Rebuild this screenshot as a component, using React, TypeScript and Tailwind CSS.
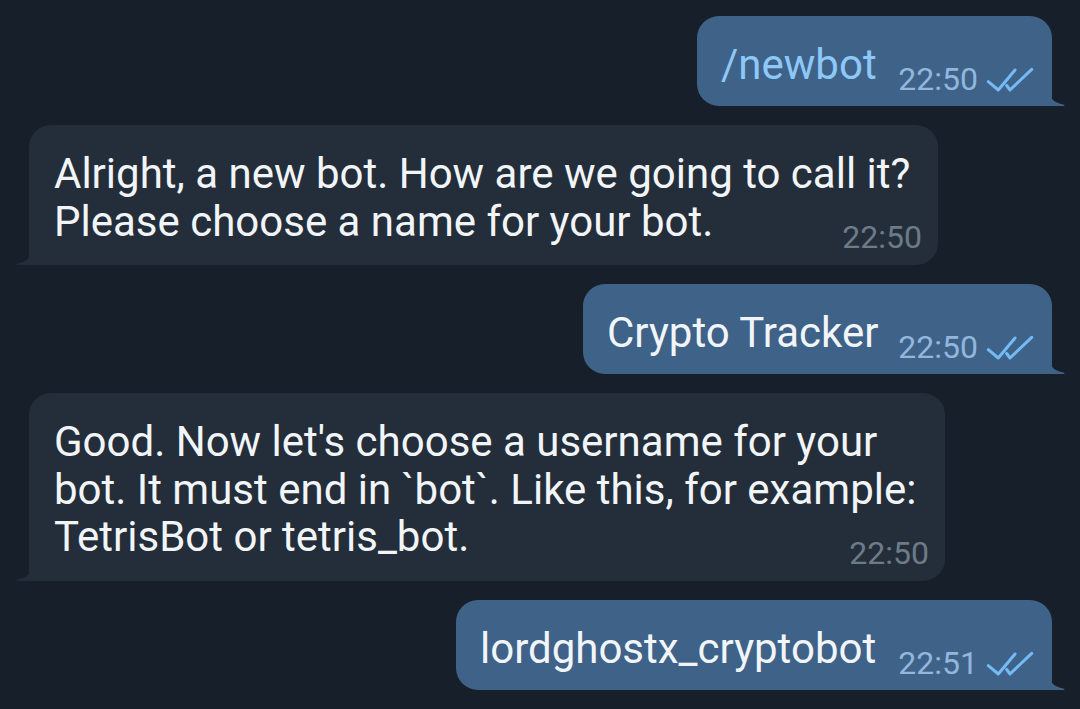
import React from "react";

const font = { fontFamily: "Roboto, 'Noto Sans', sans-serif" };

function Checks() {
  return (
    <svg width="48" height="25" viewBox="0 0 48 25" fill="none" className="mb-[3px] shrink-0">
      <path d="M2.3 14.7 L12.3 23 L29 3" stroke="#74bbf5" strokeWidth="3" strokeLinecap="round" strokeLinejoin="round" />
      <path d="M20.7 18.5 L24 23 L45.7 2.3" stroke="#74bbf5" strokeWidth="3" strokeLinecap="round" strokeLinejoin="round" />
    </svg>
  );
}

function OutTail() {
  return (
    <svg width="16" height="22" viewBox="0 0 16 22" className="absolute -right-[14px] bottom-0">
      <path d="M0 0 L0 10 Q1 18 13 20.5 Q15.5 21.2 14 22 L0 22 Z" fill="#3f6289" />
    </svg>
  );
}

function InTail() {
  return (
    <svg width="16" height="22" viewBox="0 0 16 22" className="absolute -left-[14px] bottom-0">
      <path d="M16 0 L16 10 Q15 18 3 20.5 Q0.5 21.2 2 22 L16 22 Z" fill="#232e3a" />
    </svg>
  );
}

function Out({ text, w, time, cmd }: { text: string; w: string; time: string; cmd?: boolean }) {
  return (
    <div className={`relative self-end mr-[28px] ${w} flex items-end justify-between rounded-[22px] rounded-br-none bg-[#3f6289] pl-[24px] pr-[18px] pt-[25px] pb-[11px]`}>
      <div className={`mb-[7px] text-[42px] leading-[47px] whitespace-nowrap ${cmd ? "text-[#8ec8f8]" : "text-[#f2f5f8]"}`}>{text}</div>
      <div className="flex items-end gap-[8px]">
        <span className="text-[32px] leading-none text-[#92b7dd]">{time}</span>
        <Checks />
      </div>
      <OutTail />
    </div>
  );
}

function In({ lines, w }: { lines: string[]; w: string }) {
  return (
    <div className={`relative self-start ml-[29px] ${w} flex flex-col rounded-[22px] rounded-bl-none bg-[#232e3a] pl-[25px] pr-[16px] pt-[25px] pb-[12px]`}>
      <div className="text-[42px] leading-[47.5px] whitespace-nowrap text-[#f2f5f8]">
        {lines.map((l, i) => (
          <div key={i}>{l}</div>
        ))}
      </div>
      <span className="self-end -mt-[24px] text-[32px] leading-none text-[#6d7b88]">22:50</span>
      <InTail />
    </div>
  );
}

export default function App() {
  return (
    <div className="w-[1080px] h-[709px] overflow-hidden bg-[#17202a] flex flex-col gap-[19px] pt-[16px]" style={font}>
      <Out text="/newbot" w="w-[355px]" time="22:50" cmd />
      <In w="w-[909px]" lines={["Alright, a new bot. How are we going to call it?", "Please choose a name for your bot."]} />
      <Out text="Crypto Tracker" w="w-[469px]" time="22:50" />
      <In
        w="w-[916px]"
        lines={[
          "Good. Now let's choose a username for your",
          "bot. It must end in `bot`. Like this, for example:",
          "TetrisBot or tetris_bot.",
        ]}
      />
      <Out text="lordghostx_cryptobot" w="w-[596px]" time="22:51" />
    </div>
  );
}
